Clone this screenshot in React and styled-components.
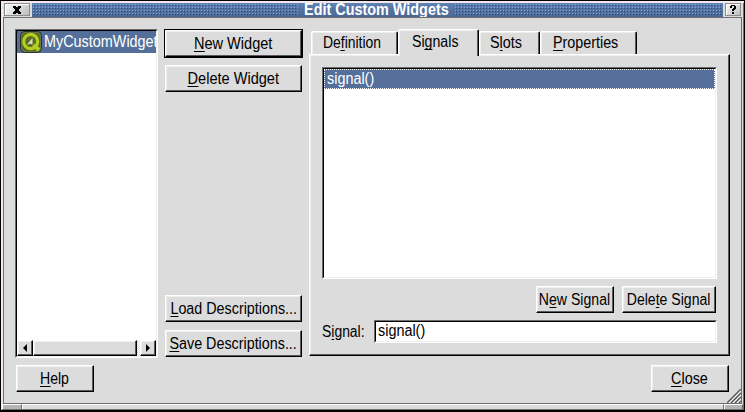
import React from 'react';
import styled, { createGlobalStyle, css } from 'styled-components';

const Global = createGlobalStyle`
  *{box-sizing:border-box}
  body{margin:0;background:#000;overflow:hidden}
`;
const raised = css`
  border:1px solid;border-color:#fff #000 #000 #fff;
  box-shadow:inset -1px -1px #5a5a5a, inset 1px 1px #efefef;
`;
const sunken = css`
  border:1px solid;border-color:#6e6e6e #fff #fff #6e6e6e;
  &::after{content:'';position:absolute;inset:0;pointer-events:none;
    border:1px solid;border-color:#000 #efefef #efefef #000}
`;
const Window = styled.div`
  width:745px;height:412px;border:1px solid #000;border-bottom-width:2px;background:#dcdcdc;
  display:flex;flex-direction:column;font:16px/18px "Liberation Sans",Arial,sans-serif;color:#000;
  box-shadow:inset 2px 2px #f4e8ec, inset -1px 0 #6c6c6c;
`;
const TitleBar = styled.div`
  height:16px;padding:2px 3px 0;display:flex;flex:none;
`;
const TitleButton = styled.div`
  width:${p => p.$w}px;height:13px;flex:none;border:1px solid #8c8c8c;
  box-shadow:inset 1px 1px #fff;
  background:linear-gradient(135deg,#fafafa,#bcbcbc);display:flex;align-items:center;justify-content:center;
`;
const TitleStripe = styled.div`
  flex:1;min-width:0;margin:0 2px;height:14px;display:flex;background:linear-gradient(#5f84b8,#5473a2 45%,#4c6894);
`;
const DotsArea = styled.svg`width:${p => p.$w}px;height:14px;flex:none;`;
const TitleText = styled.div`
  flex:1;min-width:0;display:flex;justify-content:center;color:#fff;font-weight:bold;line-height:14px;white-space:nowrap;
`;
const Body = styled.div`
  flex:1;margin:0 2px;border:1px solid #6e6e6e;background:#dcdcdc;
  padding:11px 11px 0 11px;position:relative;
`;
const Columns = styled.div`display:flex;height:329px;`;
const WidgetList = styled.div`
  ${sunken} position:relative;width:143px;height:329px;background:#fff;padding:1px;display:flex;flex-direction:column;
`;
const WidgetRow = styled.div`
  height:22px;background:#54709a;color:#fff;display:flex;align-items:center;overflow:hidden;padding-left:3px;gap:2px;flex:none;
  svg{flex:none}
`;
const Scroll = styled.div`
  margin-top:auto;height:16px;display:flex;
  background:repeating-conic-gradient(#fff 0 25%,#dcdcdc 0 50%) 0 0/2px 2px;
`;
const ScrollPart = styled.div`
  ${raised} width:${p => p.$w}px;margin-right:${p => p.$gap || 0}px;background:#dcdcdc;display:flex;align-items:center;justify-content:center;
`;
const ButtonColumn = styled.div`width:139px;margin-left:6px;display:flex;flex-direction:column;align-items:center;`;
const Button = styled.div`
  ${raised} width:${p => p.$w}px;height:27px;background:#dcdcdc;display:flex;align-items:center;justify-content:center;
  margin-top:${p => p.$mt || 0}px;padding-right:${p => p.$pr || 0}px;flex:none;
`;
const DefaultFrame = styled.div`width:139px;height:29px;border:1px solid #000;`;
const Label = styled.span`
  white-space:nowrap;flex:none;display:inline-block;
  transform:scaleX(${p => p.$sx || 0.9});transform-origin:${p => p.$left ? 'left' : 'center'};
`;
const Key = styled.span`border-bottom:1px solid;display:inline-block;height:17px;line-height:18px;`;
const TabArea = styled.div`width:421px;margin-left:6px;display:flex;flex-direction:column;`;
const Tabs = styled.div`display:flex;height:25px;align-items:flex-end;padding-left:2px;`;
const Tab = styled.div`
  width:${p => p.$w}px;height:${p => p.$on ? 27 : 23}px;margin-bottom:${p => p.$on ? -2 : 0}px;
  position:relative;z-index:${p => p.$on ? 2 : 0};background:#dcdcdc;
  border:solid;border-width:1px 1px 0;border-color:#fff #000 #000 #fff;border-radius:2px 2px 0 0;
  box-shadow:inset -1px 0 #5a5a5a, inset 1px 1px #efefef;
  padding:${p => p.$on ? 3 : 2}px 0 0 ${p => p.$pl}px;
`;
const Pane = styled.div`
  ${raised} height:302px;padding:12px 12px 0;position:relative;
`;
const SignalList = styled.div`${sunken} position:relative;width:395px;height:212px;background:#fff;padding:1px;`;
const SignalRow = styled.div`height:20px;background:#54709a;border:1px dotted #fff;color:#fff;padding-left:2px;line-height:18px;`;
const PaneButtons = styled.div`display:flex;justify-content:flex-end;gap:8px;height:27px;margin:7px 1px 7px 0;`;
const Field = styled.div`display:flex;height:23px;align-items:center;`;
const FieldLabel = styled.div`width:52px;flex:none;`;
const Input = styled.div`${sunken} position:relative;width:343px;height:23px;background:#fff;padding:1px 0 0 3px;`;
const Footer = styled.div`display:flex;justify-content:space-between;margin:7px 1px 0 1px;`;
const Grip = styled.svg`position:absolute;right:0;bottom:0;`;
const BottomEdge = styled.div`
  height:6px;flex:none;display:flex;margin:0 1px;border-bottom:1px solid #6e6e6e;
`;
const EdgePart = styled.div`
  ${p => p.$w ? `width:${p.$w}px` : 'flex:1'};background:${p => p.$w ? '#b4b4b4' : '#dcdcdc'};
  border-top:1px solid #fff;border-left:1px solid #fff;border-right:1px solid #6e6e6e;
`;

const QtIcon = () => (
  <svg width="22" height="22" viewBox="0 0 22 22">
    <rect x="0.5" y="0.5" width="21" height="21" rx="4" fill="#6a7648" stroke="#2c3428" />
    <rect x="2" y="2" width="18" height="18" rx="5" fill="#566420" />
    <ellipse cx="10.7" cy="10.5" rx="7" ry="7.2" fill="#5a6c24" stroke="#b2d01c" strokeWidth="3.2" />
    <path d="M13.500 14l5.500 5" stroke="#b2d01c" strokeWidth="4" />
    <path d="M7 13.500L12.500 7V14L10.500 12.500L8 13.500z" fill="#d8dfb8" />
  </svg>
);

const Dots = ({ w, id }) => (
  <DotsArea $w={w} shapeRendering="crispEdges">
    <pattern id={id} width="3" height="3" patternUnits="userSpaceOnUse" x="1" y="1">
      <path d="M0 0h1v1H0z" fill="#82a6dc" />
      <path d="M1 1h1v1H1z" fill="#2f4a76" />
    </pattern>
    <rect x="1" y="1" width={w - 2} height="12" fill={`url(#${id})`} />
  </DotsArea>
);

export default function App() {
  return (
    <>
      <Global />
      <Window>
        <TitleBar>
          <TitleButton $w={26}>
            <svg width="8" height="8" viewBox="0 0 8 8" shapeRendering="crispEdges"><path d="M0 0h3v1h2V0h3v2H7v1H6v2h1v1h1v2H5V7H3v1H0V6h1V5h1V3H1V2H0z" /></svg>
          </TitleButton>
          <TitleStripe><Dots w={267} id="dotsLeft" /><TitleText><Label $sx={0.9}>Edit Custom Widgets</Label></TitleText><Dots w={269} id="dotsRight" /></TitleStripe>
          <TitleButton $w={16}>
            <svg width="6" height="9" viewBox="0 0 6 9" shapeRendering="crispEdges"><path d="M1 0h4v1h1v3H5v1H4v1H2V4h1V3h1V1H2v2H0V1h1zM2 7h2v2H2z" /></svg>
          </TitleButton>
        </TitleBar>
        <Body>
          <Columns>
            <WidgetList>
              <WidgetRow><QtIcon /><Label $left $sx={0.9}>MyCustomWidget</Label></WidgetRow>
              <Scroll>
                <ScrollPart $w={16}><svg width="4" height="8"><path d="M4 0v8L0 4z" /></svg></ScrollPart>
                <ScrollPart $w={104} $gap={3} />
                <ScrollPart $w={16}><svg width="4" height="8"><path d="M0 0v8l4-4z" /></svg></ScrollPart>
              </Scroll>
            </WidgetList>
            <ButtonColumn>
              <DefaultFrame><Button $w={137}><Label $sx={0.91}><Key>N</Key>ew Widget</Label></Button></DefaultFrame>
              <Button $w={137} $mt={7}><Label $sx={0.91}><Key>D</Key>elete Widget</Label></Button>
              <Button $w={137} $mt={203}><Label $sx={0.895}><Key>L</Key>oad Descriptions...</Label></Button>
              <Button $w={137} $mt={8}><Label $sx={0.895}><Key>S</Key>ave Descriptions...</Label></Button>
            </ButtonColumn>
            <TabArea>
              <Tabs>
                <Tab $w={87} $pl={11}><Label $left $sx={0.87}>De<Key>f</Key>inition</Label></Tab>
                <Tab $w={81} $pl={13} $on><Label $left $sx={0.885}>Si<Key>g</Key>nals</Label></Tab>
                <Tab $w={61} $pl={10}><Label $left $sx={0.9}>S<Key>l</Key>ots</Label></Tab>
                <Tab $w={97} $pl={12}><Label $left $sx={0.895}><Key>P</Key>roperties</Label></Tab>
              </Tabs>
              <Pane>
                <SignalList><SignalRow><Label $left>signal()</Label></SignalRow></SignalList>
                <PaneButtons>
                  <Button $w={78} $pr={1}><Label $sx={0.88}>N<Key>e</Key>w Signal</Label></Button>
                  <Button $w={94}><Label $sx={0.88}>Dele<Key>t</Key>e Signal</Label></Button>
                </PaneButtons>
                <Field><FieldLabel><Label $left $sx={0.87}>S<Key>i</Key>gnal:</Label></FieldLabel><Input><Label $left>signal()</Label></Input></Field>
              </Pane>
            </TabArea>
          </Columns>
          <Footer>
            <Button $w={78} $pr={2}><Label $sx={0.88}><Key>H</Key>elp</Label></Button>
            <Button $w={78} $pr={2}><Label $sx={0.9}><Key>C</Key>lose</Label></Button>
          </Footer>
          <Grip width="14" height="14"><path d="M0 14L14 0M4 14L14 4M8 14l6-6M12 14l2-2" stroke="#5a5a5a" strokeWidth="1.500" /><path d="M2 14L14 2M6 14l8-8M10 14l4-4" stroke="#fff" /></Grip>
        </Body>
        <BottomEdge><EdgePart $w={20} /><EdgePart /><EdgePart $w={19} /></BottomEdge>
      </Window>
    </>
  );
}
